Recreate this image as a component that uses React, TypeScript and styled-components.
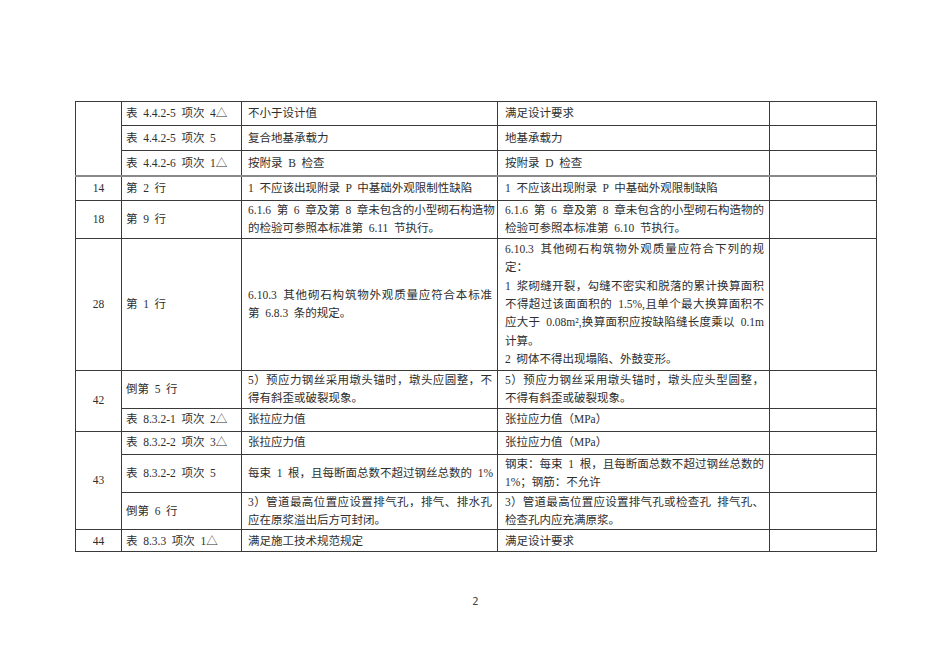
import styled, { createGlobalStyle } from 'styled-components'

const GlobalStyle = createGlobalStyle`
    html, body {
        margin: 0;
        padding: 0;
        background: #ffffff;
    }
`

const Page = styled.div`
    width: 950px;
    height: 672px;
    box-sizing: border-box;
    padding: 101px 0 0 75px;
    display: flex;
    flex-direction: column;
    font-family: "Liberation Serif", "Noto Sans CJK SC", serif;
    color: #2e2e2e;
`

const Table = styled.table`
    border-collapse: collapse;
    table-layout: fixed;
    width: 801px;
    border: 1.5px solid #333;
    font-size: 11.5px;
`

const Row = styled.tr<{ $h: number; $heavy?: boolean }>`
    height: ${p => p.$h}px;
    ${p => p.$heavy && 'border-top: 2px solid #8a8a8a;'}
`

const Cell = styled.td<{ $center?: boolean; $indent?: number }>`
    border: 1px solid #3a3a3a;
    padding: 0 5px 0 ${p => p.$indent ?? 5}px;
    vertical-align: middle;
    text-align: ${p => (p.$center ? 'center' : 'left')};
    line-height: 18.3px;
    word-spacing: 2.8px;
    white-space: nowrap;
    overflow: hidden;
`

const Line = styled.div<{ $fill?: boolean }>`
    text-align: justify;
    text-align-last: ${p => (p.$fill ? 'justify' : 'left')};
`

const PageNumber = styled.div`
    width: 801px;
    margin-top: 44px;
    padding-right: 4px;
    text-align: center;
    font-family: "DejaVu Sans", "Liberation Sans", sans-serif;
    font-size: 10px;
    color: #444;
`

type Text = string | string[]

const Lines = ({ text }: { text: Text }) => {
    const lines = Array.isArray(text) ? text : [text]
    return (
        <>
            {lines.map((l, i) => (
                <Line key={i} $fill={i < lines.length - 1 && l.length > 10}>{l}</Line>
            ))}
        </>
    )
}

interface Entry {
    no?: string
    span?: number
    where: string
    before: Text
    after: Text
    h: number
    heavy?: boolean
}

const entries: Entry[] = [
    { no: '', span: 3, where: '表 4.4.2-5 项次 4△', before: '不小于设计值', after: '满足设计要求', h: 24 },
    { where: '表 4.4.2-5 项次 5', before: '复合地基承载力', after: '地基承载力', h: 25 },
    { where: '表 4.4.2-6 项次 1△', before: '按附录 B 检查', after: '按附录 D 检查', h: 25 },
    {
        no: '14', where: '第 2 行', heavy: true,
        before: '1 不应该出现附录 P 中基础外观限制性缺陷',
        after: '1 不应该出现附录 P 中基础外观限制缺陷', h: 25
    },
    {
        no: '18', where: '第 9 行',
        before: ['6.1.6 第 6 章及第 8 章未包含的小型砌石构造物', '的检验可参照本标准第 6.11 节执行。'],
        after: ['6.1.6 第 6 章及第 8 章未包含的小型砌石构造物的', '检验可参照本标准第 6.10 节执行。'],
        h: 36
    },
    {
        no: '28', where: '第 1 行',
        before: ['6.10.3 其他砌石构筑物外观质量应符合本标准', '第 6.8.3 条的规定。'],
        after: [
            '6.10.3 其他砌石构筑物外观质量应符合下列的规',
            '定：',
            '1 浆砌缝开裂，勾缝不密实和脱落的累计换算面积',
            '不得超过该面面积的 1.5%,且单个最大换算面积不',
            '应大于 0.08m²,换算面积应按缺陷缝长度乘以 0.1m',
            '计算。',
            '2 砌体不得出现塌陷、外鼓变形。'
        ],
        h: 132
    },
    {
        no: '42', span: 2, where: '倒第 5 行',
        before: ['5）预应力钢丝采用墩头锚时，墩头应圆整，不', '得有斜歪或破裂现象。'],
        after: ['5）预应力钢丝采用墩头锚时，墩头应头型圆整，', '不得有斜歪或破裂现象。'],
        h: 38
    },
    { where: '表 8.3.2-1 项次 2△', before: '张拉应力值', after: '张拉应力值（MPa）', h: 23 },
    { no: '43', span: 3, where: '表 8.3.2-2 项次 3△', before: '张拉应力值', after: '张拉应力值（MPa）', h: 23 },
    {
        where: '表 8.3.2-2 项次 5',
        before: '每束 1 根，且每断面总数不超过钢丝总数的 1%',
        after: ['钢束：每束 1 根，且每断面总数不超过钢丝总数的', '1%；钢筋：不允许'],
        h: 38
    },
    {
        where: '倒第 6 行',
        before: ['3）管道最高位置应设置排气孔，排气、排水孔', '应在原浆溢出后方可封闭。'],
        after: ['3）管道最高位置应设置排气孔或检查孔 排气孔、', '检查孔内应充满原浆。'],
        h: 37
    },
    { no: '44', where: '表 8.3.3 项次 1△', before: '满足施工技术规范规定', after: '满足设计要求', h: 22 }
]

const App = () => (
    <Page>
        <GlobalStyle />
        <Table>
            <colgroup>
                <col style={{ width: 46 }} />
                <col style={{ width: 120 }} />
                <col style={{ width: 256 }} />
                <col style={{ width: 272 }} />
                <col style={{ width: 107 }} />
            </colgroup>
            <tbody>
                {entries.map((e, i) => (
                    <Row key={i} $h={e.h} $heavy={e.heavy}>
                        {e.no !== undefined && (
                            <Cell $center rowSpan={e.span ?? 1}>{e.no}</Cell>
                        )}
                        <Cell $indent={4}>{e.where}</Cell>
                        <Cell $indent={6}><Lines text={e.before} /></Cell>
                        <Cell $indent={7}><Lines text={e.after} /></Cell>
                        <Cell />
                    </Row>
                ))}
            </tbody>
        </Table>
        <PageNumber>2</PageNumber>
    </Page>
)

export default App
